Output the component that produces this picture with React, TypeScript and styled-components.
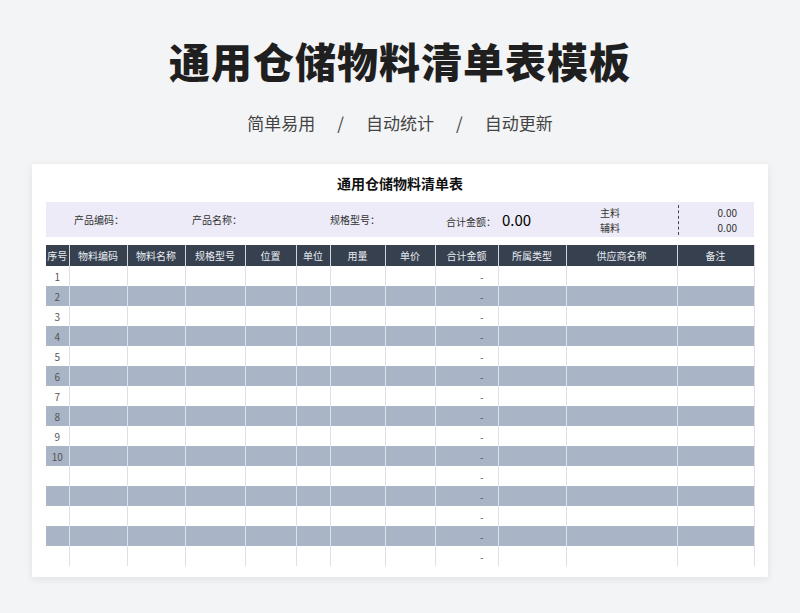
import React from "react";
import styled, { createGlobalStyle } from "styled-components";

const G = createGlobalStyle`
  body{margin:0;background:#f3f4f6;font-family:"Noto Sans CJK SC","Noto Sans",sans-serif;}
`;
const Page = styled.div`width:800px;height:613px;display:flex;flex-direction:column;align-items:center;`;
const Title = styled.h1`margin:34px 0 0;font-size:41px;font-weight:900;color:#1f1f1f;letter-spacing:1px;line-height:52px;`;
const Sub = styled.div`margin-top:25px;font-size:17px;color:#444;display:flex;gap:22px;line-height:24px;`;
const Card = styled.div`margin-top:29px;width:736px;height:413px;background:#fff;box-shadow:0 2px 8px rgba(0,0,0,.08);padding:0 14px;box-sizing:border-box;`;
const CardTitle = styled.div`text-align:center;font-size:14px;font-weight:700;color:#111;height:38px;line-height:38px;`;
const Info = styled.div`height:35px;background:#ecebf7;display:flex;align-items:center;font-size:10px;color:#333;`;
const Lbl = styled.div<{w:number}>`width:${p=>p.w}px;flex:none;`;
const Big = styled.span`font-size:15px;color:#000;margin-left:6px;`;
const Stack = styled.div<{w:number;align?:string}>`width:${p=>p.w}px;display:flex;flex-direction:column;text-align:${p=>p.align||"left"};line-height:15px;`;
const Dash = styled.div`width:0;height:30px;border-left:1px dashed #444;`;
const Table = styled.table`margin-top:8px;width:708px;border-collapse:collapse;table-layout:fixed;font-size:10px;`;
const Th = styled.th`background:#36404f;color:#e8ecf2;font-weight:400;height:21px;border-right:1px solid #cfd5de;padding:0;`;
const Tr = styled.tr<{g:boolean}>`background:${p=>p.g?"#a9b4c6":"#fff"};`;
const Td = styled.td<{r?:boolean}>`height:20px;padding:0 ${p=>p.r?"14px":"0"} 0 0;border-right:1px solid #dde1e7;color:#555;text-align:${p=>p.r?"right":"center"};`;

const cols = [["序号",23],["物料编码",58],["物料名称",58],["规格型号",60],["位置",51],["单位",34],["用量",55],["单价",50],["合计金额",63],["所属类型",68],["供应商名称",111],["备注",77]] as const;

export default function App(){
  return <Page><G/>
    <Title>通用仓储物料清单表模板</Title>
    <Sub><span>简单易用</span><span>/</span><span>自动统计</span><span>/</span><span>自动更新</span></Sub>
    <Card>
      <CardTitle>通用仓储物料清单表</CardTitle>
      <Info>
        <Lbl w={28}/><Lbl w={118}>产品编码：</Lbl><Lbl w={138}>产品名称：</Lbl><Lbl w={116}>规格型号：</Lbl>
        <Lbl w={154}>合计金额：<Big>0.00</Big></Lbl>
        <Stack w={78}><span>主料</span><span>辅料</span></Stack>
        <Dash/>
        <Stack w={58} align="right"><span>0.00</span><span>0.00</span></Stack>
      </Info>
      <Table>
        <colgroup>{cols.map(([n,w])=><col key={n} style={{width:w}}/>)}</colgroup>
        <thead><tr>{cols.map(([n])=><Th key={n}>{n}</Th>)}</tr></thead>
        <tbody>{Array.from({length:15},(_,i)=><Tr key={i} g={i%2===1}>
          {cols.map(([n],j)=><Td key={n} r={j===8}>{j===0&&i<10?i+1:j===8?"-":""}</Td>)}
        </Tr>)}</tbody>
      </Table>
    </Card>
  </Page>;
}
